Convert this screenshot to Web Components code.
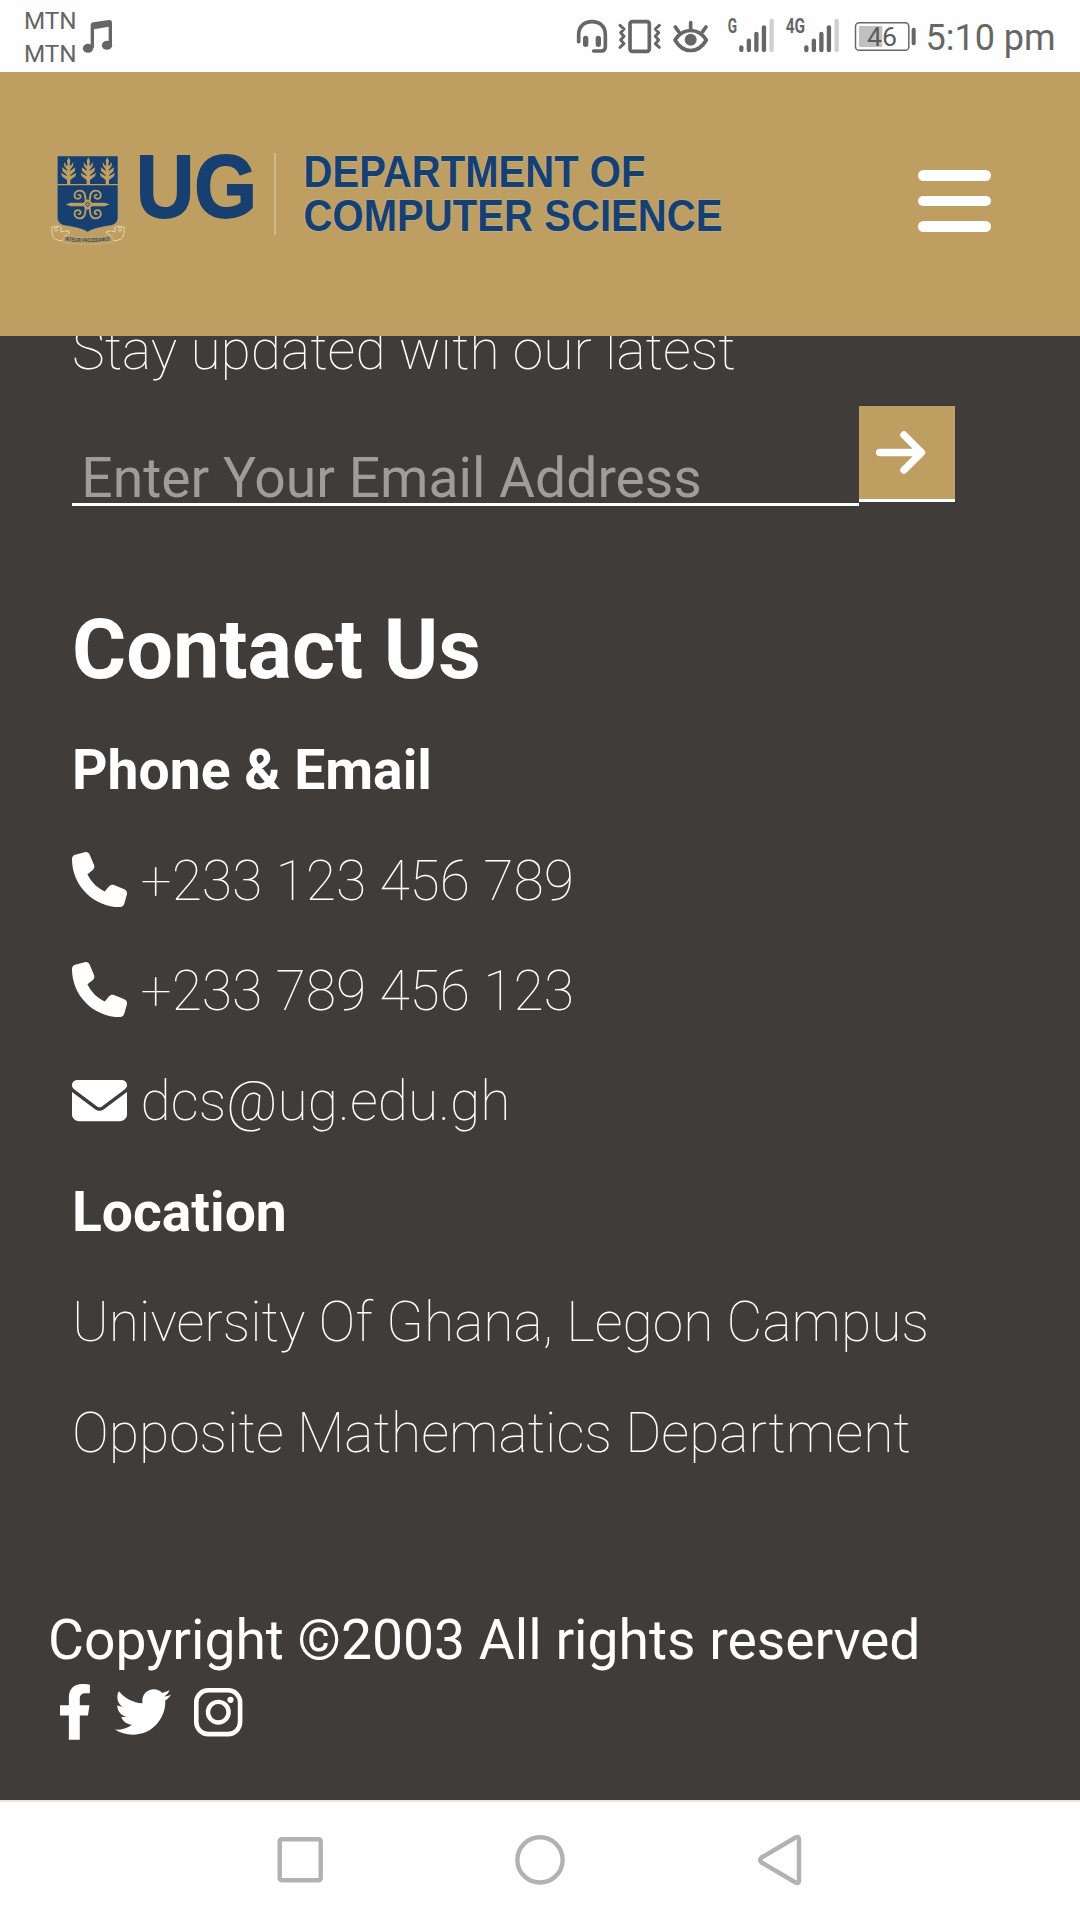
<!DOCTYPE html>
<html lang="en">
<head>
<meta charset="utf-8">
<title>Department of Computer Science</title>
<style>
html,body{margin:0;padding:0;background:#403c39}
body{width:1080px;height:1920px;overflow:hidden;font-family:Roboto,"Noto Sans",sans-serif}
</style>
</head>
<body>
<phone-screen>
  <status-bar slot="status"></status-bar>
  <site-header slot="header"></site-header>
  <news-letter>Stay updated with our latest</news-letter>
  <contact-block heading="Contact Us">
    <info-line strong>Phone &amp; Email</info-line>
    <info-line icon="phone">+233 123 456 789</info-line>
    <info-line icon="phone">+233 789 456 123</info-line>
    <info-line icon="mail">dcs@ug.edu.gh</info-line>
    <info-line strong>Location</info-line>
    <info-line>University Of Ghana, Legon Campus</info-line>
    <info-line>Opposite Mathematics Department</info-line>
  </contact-block>
  <copy-right>Copyright ©2003 All rights reserved</copy-right>
  <nav-bar slot="nav"></nav-bar>
</phone-screen>
<script>
const define = (name, html) => customElements.define(name, class extends HTMLElement {
  constructor() {
    super();
    this.attachShadow({mode: 'open'}).innerHTML = typeof html === 'function' ? html(this) : html;
  }
});

define('phone-screen', `<style>
:host{display:flex;flex-direction:column;width:1080px;height:1920px;background:#403c39;color:#fff}
main{flex:1;min-height:0;overflow:hidden;display:flex;flex-direction:column}
</style><slot name="status"></slot><slot name="header"></slot><main><slot></slot></main><slot name="nav"></slot>`);

const bars = x => [138,116,96,76].map((a,i)=>
  `<path d="M${x+i*22.6} ${a+(i?6:4)}V150" stroke="#666" stroke-width="13" stroke-linecap="round"/>`).join('')
  + `<path d="M${x+91} 63V150" stroke="#d0d0d0" stroke-width="13" stroke-linecap="round"/>`;

define('status-bar', `<style>
:host{display:flex;align-items:stretch;height:72px;background:#fefefe;color:#666;box-sizing:border-box}
.sim{display:flex;flex-direction:column;width:57px;padding:4px 0 0 24px;font-size:24.300px;line-height:33px}
svg{display:block;height:72px;flex:none}
.fill{flex:1}
.time{width:160px;box-sizing:border-box;padding-left:5.500px;font-size:36px;line-height:76px;white-space:nowrap}
</style>
<div class="sim"><span>MTN</span><span>MTN</span></div>
<svg width="34" viewBox="243 0 102 216"><g fill="#666"><ellipse cx="264" cy="145" rx="15.500" ry="13.500"/><ellipse cx="321" cy="136" rx="15.500" ry="13.500"/><path d="M272 143V76Q272 68 280 67L327 60Q336 59 336 68V135H326V80L282 88V143Z"/></g></svg>
<div class="fill"></div>
<svg width="38.330" viewBox="45 0 115 216" fill="none" stroke="#666"><path d="M56 125V104C56 78 74 65 96 65S136 78 136 104V140Q136 153 123 153H101" stroke-width="11" stroke-linecap="round"/><path d="M77 115V133M115 115V133" stroke-width="16" stroke-linecap="round"/></svg>
<svg width="55" viewBox="160 0 165 216" fill="none" stroke="#666" stroke-linecap="round" stroke-linejoin="round"><rect x="211" y="65" width="58" height="89" rx="7" stroke-width="11"/><path d="M181 76L193 87 183 98 193 109 183 120 193 131 181 142M299 76L287 87 297 98 287 109 297 120 287 131 299 142" stroke-width="9"/></svg>
<svg width="51.670" viewBox="325 0 155 216" fill="none" stroke="#666" stroke-linecap="round"><path d="M346 120C370 82 416 82 440 120C416 162 370 162 346 120Z" stroke-width="11" stroke-linejoin="round"/><circle cx="393" cy="119" r="18" fill="#666" stroke="none"/><path d="M393 68V88M347 81L357 95M439 81L429 95" stroke-width="11"/></svg>
<svg width="60" viewBox="480 0 180 216"><text x="503" y="100" font-size="58" font-family="Roboto" font-weight="700" fill="#666" textLength="28" lengthAdjust="spacingAndGlyphs">G</text>${bars(544)}</svg>
<svg width="66.670" viewBox="660 0 200 216"><text x="677" y="100" font-size="58" font-family="Roboto" font-weight="700" fill="#666" textLength="58" lengthAdjust="spacingAndGlyphs">4G</text>${bars(739)}</svg>
<svg width="73.330" viewBox="860 0 220 216"><rect x="885.500" y="68" width="160" height="83" rx="11" fill="none" stroke="#666" stroke-width="4.500"/><rect x="896" y="78" width="70" height="63" rx="4" fill="#c0c0c0"/><text x="920" y="138" font-size="80" font-family="Roboto" fill="#5c5c5c" textLength="90" lengthAdjust="spacingAndGlyphs">46</text><path d="M1060 89V130" stroke="#666" stroke-width="12" stroke-linecap="round"/></svg>
<div class="time">5:10 pm</div>`);

const tree = x => `<path transform="translate(${x} 0)" d="M0 52L5 62 3 76 6 77 14 66 13 78 4 90 5 92 20 82 18 94 5 106 6 108 23 98 20 109 5 120V134H-5V120L-20 109-23 98-6 108-5 106-18 94-20 82-5 92-4 90-13 78-14 66-6 77-3 76-5 62Z"/>`;
const curl = `<path d="M137 190C137 160 132 152 119 152C107 152 102 161 104 169C106 178 119 179 122 171C123 165 117 163 114 166" fill="none" stroke="#be9f61" stroke-width="5.500"/>`;

define('site-header', `<style>
:host{display:flex;align-items:flex-start;justify-content:space-between;height:264px;box-sizing:border-box;background:#be9f61;padding:48px 89px 0 40px}
svg{display:block;overflow:visible}
.menu{display:flex;flex-direction:column;gap:15px;padding-top:50px}
.menu i{display:block;width:73px;height:10.700px;border-radius:6px;background:#fff}
text{font-family:"Liberation Sans",Arial,sans-serif;font-weight:700;fill:#173f70;stroke:#b9b6a4;stroke-width:1.200px;paint-order:stroke}
text.ug{stroke:#173f70;stroke-width:1.800px}
</style>
<svg width="740" height="160" viewBox="0 -20 740 160">
<g transform="scale(.33333)">
<path d="M52 48H234V232Q234 250 216 256Q160 264 143 276Q126 264 70 256Q52 250 52 232Z" fill="#173f70" stroke="#aaa68f" stroke-width="1.500"/>
<path d="M52 134H234" stroke="#be9f61" stroke-width="3.500"/>
<g fill="#be9f61">${tree(86)}${tree(145)}${tree(202)}
<path d="M77 193L92 188H130L143 178L156 188H194L209 193L194 199H156L143 210L130 199H92Z"/></g>
${curl}<g transform="matrix(-1 0 0 1 286 0)">${curl}</g><g transform="matrix(1 0 0 -1 0 387)">${curl}</g><g transform="matrix(-1 0 0 -1 286 387)">${curl}</g>
<path d="M143 186L149 193 143 200 137 193Z" fill="#be9f61" stroke="#173f70" stroke-width="3"/>
<g fill="#be9f61" stroke="#f1e7cd" stroke-width="2.600" stroke-dasharray="12 2"><path d="M35 262Q50 256 64 262L62 276Q80 270 90 276L74 290V302Q50 304 40 292L36 280Z"/><path d="M253 262Q238 256 224 262L226 276Q208 270 198 276L214 290V302Q238 304 248 292L252 280Z"/><path d="M72 288Q143 300 216 288L220 306Q143 320 68 306Z" stroke="#cdb583"/><circle cx="48" cy="268" r="5"/><circle cx="240" cy="268" r="5"/></g>
<path id="rib" d="M75 302Q143 312 213 301" fill="none"/>
<text style="font-size:18px;stroke:none;fill:#2f4460"><textPath href="#rib" textLength="136" lengthAdjust="spacingAndGlyphs">INTEGRI PROCEDAMUS</textPath></text>
</g>
<text class="ug" x="96" y="77.400" font-size="88.500" textLength="121" lengthAdjust="spacingAndGlyphs">UG</text>
<path d="M235 13V95" stroke="#d6c39b" stroke-width="1.500"/>
<text x="263.500" y="47.200" font-size="43.600" textLength="342" lengthAdjust="spacingAndGlyphs">DEPARTMENT OF</text>
<text x="263.500" y="90.700" font-size="43.600" textLength="419" lengthAdjust="spacingAndGlyphs">COMPUTER SCIENCE</text>
</svg>
<div class="menu"><i></i><i></i><i></i></div>`);

define('news-letter', `<style>
:host{display:block;height:263px;padding-left:72px;flex:none}
p{margin:0;height:70px;font-weight:100;font-size:55.200px;line-height:29px;white-space:nowrap}
form{display:flex;align-items:flex-start}
.field{box-sizing:border-box;width:787px;height:100px;border-bottom:3px solid #fff;padding-left:9.300px;font-size:55.220px;line-height:145px;color:#9f9d9b;white-space:nowrap}
.go{box-sizing:border-box;width:96px;height:96px;border-bottom:3px solid #fff;background:#be9f61}
svg{display:block}
</style>
<p><slot></slot></p>
<form><div class="field">Enter Your Email Address</div><div class="go"><svg width="96" height="93" viewBox="0 0 96 93" fill="none" stroke="#fff" stroke-width="7.400" stroke-linecap="round" stroke-linejoin="round"><path d="M20.700 46.500H62M45 29L62.500 46.500 45 64"/></svg></div></form>`);

define('contact-block', el => `<style>
:host{display:flex;flex-direction:column;box-sizing:border-box;height:1004px;padding:1.300px 0 0 72px;flex:none}
h2{margin:0 0 14.900px;height:100px;font-size:82.900px;line-height:100px;font-weight:700}
</style><h2>${el.getAttribute('heading')}</h2><slot></slot>`);

const glyphs = {
  phone: '<path d="M164.900 24.600c-7.700-18.600-28-28.500-47.400-23.200l-88 24C12.100 30.200 0 46 0 64C0 311.400 200.600 512 448 512c18 0 33.800-12.100 38.600-29.500l24-88c5.300-19.400-4.600-39.700-23.200-47.400l-96-40c-16.300-6.800-35.200-2.100-46.300 11.600L304.700 368C234.300 334.700 177.300 277.700 144 207.300L193.300 167c13.700-11.200 18.400-30 11.600-46.300l-40-96z"/>',
  mail: '<path d="M48 64C21.500 64 0 85.500 0 112c0 15.100 7.100 29.300 19.200 38.400L236.800 313.600c11.400 8.500 27 8.500 38.400 0L492.800 150.400c12.100-9.100 19.200-23.300 19.200-38.400c0-26.500-21.500-48-48-48H48zM0 176V384c0 35.300 28.700 64 64 64H448c35.300 0 64-28.700 64-64V176L294.400 339.200c-22.800 17.100-54 17.100-76.800 0L0 176z"/>'
};
define('info-line', el => `<style>
:host{display:flex;align-items:center;height:110.400px;font-size:55.220px;line-height:110.400px;font-weight:100;white-space:nowrap}
:host([strong]){font-weight:700}
svg{width:55px;height:55px;margin:0 13.600px 3px 0;fill:#fff}
</style>${el.getAttribute('icon') ? `<svg viewBox="0 0 512 512">${glyphs[el.getAttribute('icon')]}</svg>` : ''}<span><slot></slot></span>`);

define('copy-right', `<style>
:host{display:block;padding-left:48px}
p{margin:0;font-size:55.220px;line-height:74.500px;white-space:nowrap}
div{display:flex;padding:6px 0 0 6px}
svg{display:block;height:56px;fill:#fff}
</style><p><slot></slot></p>
<div><svg width="61" viewBox="0 0 61 56"><path transform="translate(3.500 0) scale(.109)" d="M279.140 288l14.220-92.660h-88.910v-60.130c0-25.350 12.420-50.060 52.240-50.060h40.420V6.260S260.430 0 225.360 0c-73.220 0-121.080 44.380-121.080 124.720v70.620H22.890V288h81.390v224h100.170V288z"/></svg>
<svg width="56" viewBox="0 0 512 512"><path d="M459.370 151.716c.325 4.548.325 9.097.325 13.645 0 138.720-105.583 298.558-298.558 298.558-59.452 0-114.680-17.219-161.137-47.106 8.447.974 16.568 1.299 25.340 1.299 49.055 0 94.213-16.568 130.274-44.832-46.132-.975-84.792-31.188-98.112-72.772 6.498.974 12.995 1.624 19.818 1.624 9.421 0 18.843-1.300 27.614-3.573-48.081-9.747-84.143-51.980-84.143-102.985v-1.299c13.969 7.797 30.214 12.670 47.431 13.319-28.264-18.843-46.781-51.005-46.781-87.391 0-19.492 5.197-37.360 14.294-52.954 51.655 63.675 129.300 105.258 216.365 109.807-1.624-7.797-2.599-15.918-2.599-24.040 0-57.828 46.782-104.934 104.934-104.934 30.213 0 57.502 12.670 76.670 33.137 23.715-4.548 46.456-13.320 66.599-25.340-7.798 24.366-24.366 44.833-46.132 57.827 21.117-2.273 41.584-8.122 60.426-16.243-14.292 20.791-32.161 39.308-52.628 54.253z"/></svg>
<svg width="74" viewBox="-5 0 74 56" fill="none"><g fill="none" stroke="#fff"><rect x="20.300" y="6.300" width="43.800" height="43.800" rx="12" stroke-width="4.600"/><circle cx="42.300" cy="28.200" r="10.300" stroke-width="4.400"/></g><circle cx="54.500" cy="15.800" r="3.100" fill="#fff"/></svg></div>`);

define('nav-bar', `<style>
:host{display:flex;box-sizing:border-box;height:120px;border-top:2px solid #e8e5e6;padding-bottom:2px;background:#fefefe;justify-content:center;align-items:center;gap:180px}
svg{display:block}
</style>
<svg width="60" height="60" viewBox="270 1830 60 60" fill="none" stroke="#b2b2b2" stroke-width="4.400"><rect x="279.700" y="1839.300" width="41" height="41" rx="2"/></svg>
<svg width="60" height="60" viewBox="510 1830 60 60" fill="none" stroke="#b2b2b2" stroke-width="4.400"><circle cx="540" cy="1859.900" r="22.600"/></svg>
<svg width="60" height="60" viewBox="750 1830 60 60" fill="none" stroke="#b2b2b2" stroke-width="4.400" stroke-linejoin="round"><path d="M761.500 1857.500L795.500 1837.500Q799 1836 799 1839V1881Q799 1884 795.500 1882.500L761.500 1862.500Q759 1860 761.500 1857.500Z"/></svg>`);
</script>
</body>
</html>
